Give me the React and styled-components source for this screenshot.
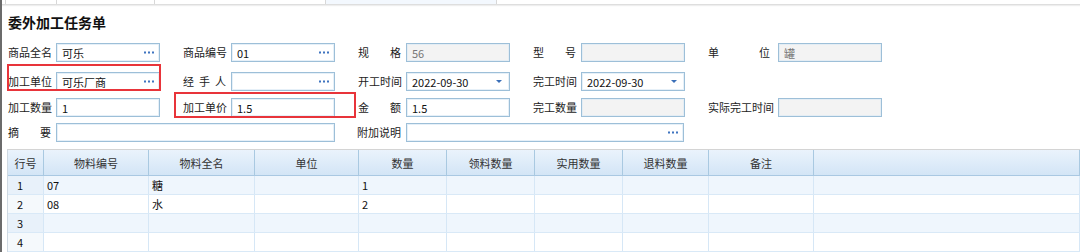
import React from 'react'
import styled, { createGlobalStyle } from 'styled-components'

const GlobalStyle = createGlobalStyle`
  html, body {
    margin: 0;
    padding: 0;
    background: #fff;
  }
  body {
    font-family: "Noto Sans CJK SC", "Noto Sans", "Liberation Sans", sans-serif;
    font-size: 11px;
    color: #222;
  }
`

const Page = styled.div`
  width: 1080px;
  height: 252px;
  overflow: hidden;
  border-left: 2px solid #6b6b6b;
  box-sizing: border-box;
  position: relative;
`

const TabStrip = styled.div`
  display: flex;
  height: 4px;
  border-bottom: 1px solid #dedede;
  box-shadow: 0 1px 1px #eeeeee;
`

const Tab = styled.div`
  width: ${p => p.w}px;
  border-right: 1px solid #d8d8d8;
  background: ${p => (p.active ? '#f3f8fe' : '#fff')};
`

const Title = styled.h1`
  margin: 8px 0 0 6px;
  font-size: 14px;
  font-weight: bold;
  line-height: 18px;
  color: #111;
`

const Form = styled.div`
  display: grid;
  grid-template-rows: 29px 26px 25px 19px;
  margin: 12px 0 0 6px;
`

const Row = styled.div`
  display: flex;
  align-items: flex-start;
`

const Field = styled.div`
  display: flex;
  align-items: center;
  height: 19px;
  margin-right: ${p => p.gap ?? 23}px;
`

const Label = styled.span`
  width: ${p => p.w ?? 43}px;
  margin-right: ${p => p.mr ?? 5}px;
  white-space: nowrap;
  font-size: 11px;
  line-height: 19px;
  text-align: ${p => (p.spread ? 'justify' : 'left')};
  text-align-last: ${p => (p.spread ? 'justify' : 'auto')};
  color: #222;
`

const Input = styled.div`
  width: ${p => p.w ?? 104}px;
  height: 19px;
  box-sizing: border-box;
  border: 1px solid #9dbfd8;
  box-shadow: inset 0 0 0 1px ${p => (p.disabled ? '#e4edf4' : '#e6f0f8')};
  background: ${p => (p.disabled ? '#f3f3f3' : '#fff')};
  display: flex;
  align-items: center;
  padding: 0 5px;
  font-size: 11px;
  color: ${p => (p.disabled ? '#777' : '#111')};
`

const Value = styled.span`
  flex: 1;
  white-space: nowrap;
  overflow: hidden;
`

const Caret = styled.span`
  width: 0;
  height: 0;
  border-left: 3px solid transparent;
  border-right: 3px solid transparent;
  border-top: 3px solid #3a6fb8;
  margin-right: 2px;
`

const Highlight = styled.div`
  position: absolute;
  border: 2px solid #e8343a;
  pointer-events: none;
  left: ${p => p.l}px;
  top: ${p => p.t}px;
  width: ${p => p.w}px;
  height: ${p => p.h}px;
  box-sizing: border-box;
`

const Table = styled.div`
  margin: 7px 0 0 5px;
  border-top: 1px solid #d4d4d4;
  border-left: 1px solid #cfd9e2;
`

const HeadRow = styled.div`
  display: flex;
  height: 25px;
  background: linear-gradient(#eaf3fc, #d3e5f6);
  border-bottom: 1px solid #a9c8e2;
`

const HeadCell = styled.div`
  width: ${p => p.w}px;
  flex: ${p => (p.grow ? 1 : 'none')};
  border-right: 1px solid #a9c9e1;
  display: flex;
  align-items: center;
  justify-content: center;
  font-size: 11px;
  color: #333;
  box-sizing: border-box;
`

const BodyRow = styled.div`
  display: flex;
  height: 18px;
  background: ${p => (p.odd ? '#eff6fd' : '#fff')};
  border-bottom: 1px solid #d9e9f7;
`

const Cell = styled.div`
  width: ${p => p.w}px;
  flex: ${p => (p.grow ? 1 : 'none')};
  border-right: 1px solid #d6e7f6;
  box-sizing: border-box;
  padding-left: ${p => (p.num ? 9 : 3)}px;
  font-size: 11px;
  line-height: 18px;
  color: #111;
  background: ${p => (p.num ? 'rgba(200, 220, 240, 0.18)' : 'transparent')};
  white-space: nowrap;
`

const columns = [
  { key: 'no', title: '行号', w: 36 },
  { key: 'code', title: '物料编号', w: 105 },
  { key: 'name', title: '物料全名', w: 106 },
  { key: 'unit', title: '单位', w: 104 },
  { key: 'qty', title: '数量', w: 88 },
  { key: 'take', title: '领料数量', w: 88 },
  { key: 'used', title: '实用数量', w: 88 },
  { key: 'back', title: '退料数量', w: 86 },
  { key: 'memo', title: '备注', w: 105 },
  { key: 'rest', title: '', grow: true }
]

const rows = [
  { no: '1', code: '07', name: '糖', qty: '1' },
  { no: '2', code: '08', name: '水', qty: '2' },
  { no: '3' },
  { no: '4' },
  { no: '' }
]

function Dots () {
  return (
    <svg width="10" height="3" viewBox="0 0 10 3">
      <rect x="0" y="0.5" width="2" height="2" fill="#3f74c0" />
      <rect x="4" y="0.5" width="2" height="2" fill="#3f74c0" />
      <rect x="8" y="0.5" width="2" height="2" fill="#3f74c0" />
    </svg>
  )
}

function Box ({ label, w, lw, spread, value, disabled, dots, caret, gap, mr }) {
  return (
    <Field gap={gap}>
      <Label w={lw} spread={spread} mr={mr}>{label}</Label>
      <Input w={w} disabled={disabled}>
        <Value>{value}</Value>
        {dots && <Dots />}
        {caret && <Caret />}
      </Input>
    </Field>
  )
}

export default function App () {
  return (
    <Page>
      <GlobalStyle />
      <TabStrip>
        <Tab w={3} />
        <Tab w={50} />
        <Tab w={97} />
        <Tab w={170} />
        <Tab w={170} active />
      </TabStrip>
      <Title>委外加工任务单</Title>
      <Form>
        <Row>
          <Box label="商品全名" value="可乐" dots />
          <Box label="商品编号" value="01" dots />
          <Box label="规格" spread value="56" disabled />
          <Box label="型号" spread disabled />
          <Box label="单位" spread lw={62} mr={8} value="罐" disabled />
        </Row>
        <Row>
          <Box label="加工单位" value="可乐厂商" dots />
          <Box label="经手人" spread value="" dots />
          <Box label="开工时间" value="2022-09-30" caret />
          <Box label="完工时间" value="2022-09-30" caret />
        </Row>
        <Row>
          <Box label="加工数量" value="1" />
          <Box label="加工单价" value="1.5" />
          <Box label="金额" spread value="1.5" />
          <Box label="完工数量" disabled />
          <Box label="实际完工时间" lw={64} mr={6} disabled />
        </Row>
        <Row>
          <Box label="摘要" spread w={279} gap={22} />
          <Box label="附加说明" lw={46} mr={3} w={278} dots />
        </Row>
      </Form>
      <Highlight l={5} t={64} w={154} h={27} />
      <Highlight l={172} t={92} w={182} h={26} />
      <Table>
        <HeadRow>
          {columns.map(c => (
            <HeadCell key={c.key} w={c.w} grow={c.grow}>{c.title}</HeadCell>
          ))}
        </HeadRow>
        {rows.map((r, i) => (
          <BodyRow key={i} odd={i % 2 === 0}>
            {columns.map(c => (
              <Cell key={c.key} w={c.w} grow={c.grow} num={c.key === 'no'}>
                {r[c.key] || ''}
              </Cell>
            ))}
          </BodyRow>
        ))}
      </Table>
    </Page>
  )
}
